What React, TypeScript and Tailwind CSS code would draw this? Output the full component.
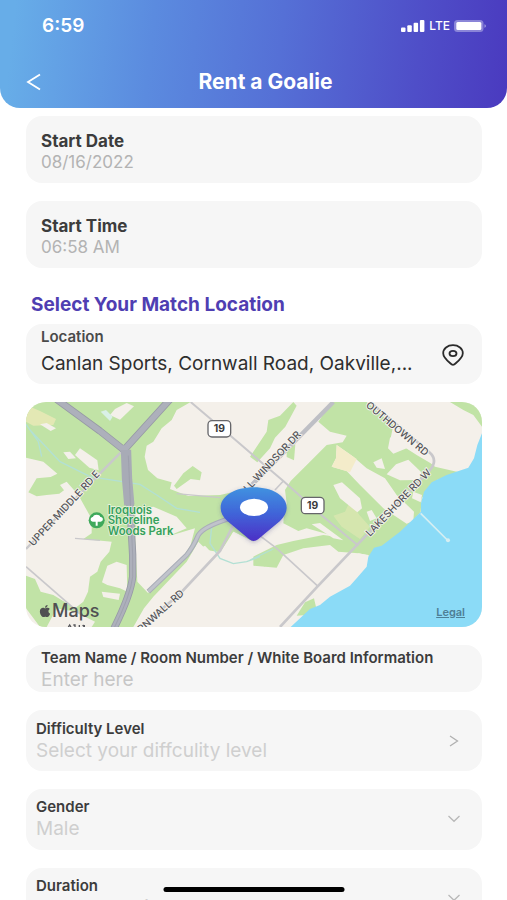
import React from "react";
import { FaApple } from "react-icons/fa";

interface CardProps {
  className?: string;
  children: React.ReactNode;
}

const Card: React.FC<CardProps> = ({ className = "", children }) => (
  <div className={`bg-[#f6f6f6] rounded-2xl ${className}`}>{children}</div>
);

interface TextFieldProps {
  id: string;
  label: string;
  value: string;
}

// Start date / start time
const TextField: React.FC<TextFieldProps> = ({ id, label, value }) => (
  <Card className="flex flex-col px-[15px] pt-[15px] pb-[9px]">
    <label htmlFor={id} className="text-[17px] leading-5 font-bold text-[#3c3c3c]">
      {label}
    </label>
    <input
      id={id}
      type="text"
      defaultValue={value}
      className="w-full h-[23px] bg-transparent text-[17px] text-[#b3b3b3] outline-none"
    />
  </Card>
);

interface SelectFieldProps {
  id: string;
  label: string;
  options: string[];
}

const SelectField: React.FC<SelectFieldProps> = ({ id, label, options }) => (
  <Card className="flex items-center pl-2.5 pr-[21px] pt-2 pb-[9px]">
    <div className="flex-1 flex flex-col">
      <label htmlFor={id} className="text-[15px] leading-5 font-semibold text-[#3c3c3c]">
        {label}
      </label>
      <select
        id={id}
        className="appearance-none w-full h-6 leading-6 bg-transparent text-[19px] text-[#cfcfcf] outline-none"
      >
        {options.map((option) => (
          <option key={option}>{option}</option>
        ))}
      </select>
    </div>
    <svg viewBox="0 0 14 8" className="w-3.5 h-2 shrink-0" fill="none" stroke="#b8b8b8" strokeWidth="1.3">
      <path d="M1.5 1 7 6.3 12.5 1" />
    </svg>
  </Card>
);

const StatusBar = () => (
  <div className="flex items-center justify-between pl-[42px] pr-[21px] text-white">
    <span className="text-[19px] leading-6 font-semibold">6:59</span>
    <div className="flex items-center gap-1">
      <svg viewBox="0 0 24 12" className="w-6 h-3" fill="white">
        <rect x="0" y="7.5" width="4.5" height="4.5" rx="1" />
        <rect x="6.3" y="5.3" width="4.5" height="6.7" rx="1" />
        <rect x="12.6" y="2.8" width="4.5" height="9.2" rx="1" />
        <rect x="18.9" y="0" width="4.5" height="12" rx="1" />
      </svg>
      <span className="text-[12px] leading-4 font-medium">LTE</span>
      <svg viewBox="0 0 32 12" className="w-8 h-3">
        <rect x="0" y="0" width="29.5" height="12" rx="3.5" fill="white" fillOpacity="0.35" />
        <rect x="2.3" y="2" width="25" height="8" rx="1.5" fill="white" />
        <path d="M30.5 4.2c1.8.6 1.8 3 0 3.6z" fill="white" fillOpacity="0.5" />
      </svg>
    </div>
  </div>
);

interface RoadLabelProps {
  x: number;
  y: number;
  angle: number;
  name: string;
}

const RoadLabel: React.FC<RoadLabelProps> = ({ x, y, angle, name }) => (
  <text
    x={x}
    y={y}
    transform={`rotate(${angle} ${x} ${y})`}
    fontSize="30"
    fontWeight="500"
    fill="#55555a"
    stroke="#f7f5f0"
    strokeWidth="5"
    paintOrder="stroke"
  >
    {name}
  </text>
);

const RouteShield: React.FC<{ x: number; y: number }> = ({ x, y }) => (
  <g>
    <rect x={x} y={y} width="68" height="49" rx="12" fill="white" stroke="#66666a" strokeWidth="4" />
    <text x={x + 34} y={y + 35} textAnchor="middle" fontSize="31" fontWeight="700" fill="#3a3a3c">
      19
    </text>
  </g>
);

const MapArt = () => (
  <svg viewBox="18 21 1368 675" preserveAspectRatio="xMidYMid slice" className="block w-full h-full">
    <defs>
      <linearGradient id="pin" x1="0" y1="0" x2="0" y2="1">
        <stop offset="0" stopColor="#3f92e0" />
        <stop offset="0.5" stopColor="#4163d8" />
        <stop offset="1" stopColor="#4c2fc6" />
      </linearGradient>
      <filter id="pinShadow" x="-20%" y="-20%" width="140%" height="140%">
        <feDropShadow dx="0" dy="4" stdDeviation="7" floodColor="#4a4a8a" floodOpacity="0.35" />
      </filter>
    </defs>
    <rect x="18" y="21" width="1368" height="675" fill="#f4f0ea" />

    {/* Parks */}
    <g fill="#c1e3a6">
      <path d="M18 21H512L470 45 455 75 425 100 400 140 380 152 374 185 384 225 412 250 455 262 450 282 505 303 600 300 690 280 700 440 640 410 625 440 600 472 560 465 535 440 500 500 400 605 372 640 340 696H60L18 640Z" />
      <path d="M820 21 830 32 796 95 765 128 750 160 712 202 690 185 740 110 745 75 780 62Z" />
      <path d="M800 165 826 148 822 196 800 186Z" />
      <path d="M935 21H1040L1120 90 1112 130 1190 180 1232 205 1245 215 1330 235 1250 255 1205 310 1202 350 1160 400 1050 482 1015 475 955 470 930 450 850 460 790 480 770 518 700 512 690 490 770 450 820 438 910 420 950 425 860 400 835 408 790 385 792 350 800 325 795 285 812 258 870 200 920 150 968 142 980 122 930 110 895 80Z" />
      <path d="M830 662 855 622 882 610 888 636 860 660Z" />
      <path d="M1290 21H1386V95L1360 60 1330 45Z" />
      <path d="M490 235 518 213 545 232 540 256 512 252 470 282 462 272Z" />
      <path d="M715 500 740 490 735 515Z" />
    </g>
    <g fill="#e3e8b4">
      <path d="M18 30 60 48 108 72 100 90 40 92 18 80Z" />
      <path d="M940 362 975 350 990 318 1018 360 1050 395 1020 432 965 395Z" fillOpacity="0.6" />
    </g>

    {/* Open land */}
    <g fill="#f4f0ea">
      <path d="M18 188 70 200 112 236 92 246 50 250 25 292 50 304 80 300 118 296 132 286 120 270 140 260 175 300 215 372 215 415 190 432 275 440 268 470 242 500 232 530 210 545 204 590 190 620 165 640 100 600 62 590 45 552 18 542Z" />
      <path d="M165 180 180 160 232 196 236 226 208 218Z" />
      <path d="M60 88 80 84 108 100 92 108Z" />
      <path d="M270 60 285 42 320 24 342 34 300 74Z" />
      <path d="M130 172 150 170 168 190 145 192Z" />
      <path d="M345 425 350 395 440 425 525 400 512 450 480 500 384 594 352 560Z" />
      <path d="M345 345 400 335 470 365 500 400 440 425 350 398Z" />
      <path d="M262 512 290 500 320 510 322 590 300 580 262 570 246 562Z" />
      <path d="M245 590 300 596 296 615 250 606Z" />
      <path d="M110 640 165 650 225 680 215 696H80Z" />
      <path d="M535 462 555 452 572 470 556 486Z" />
      <path d="M640 410 700 440V696H345L480 600 600 474Z" />
      <path d="M940 270 966 262 1020 310 1026 340 1012 352 985 330 960 310Z" />
      <path d="M1100 238 1128 208 1165 194 1204 232 1198 255 1140 256Z" />
      <path d="M1060 202 1085 190 1095 222 1070 218Z" />
      <path d="M1110 128 1132 118 1240 190 1218 192 1160 160 1120 176 1104 160Z" />
      <path d="M1040 350 1055 345 1070 370 1050 378Z" />
      <path d="M875 388 900 384 970 436 940 430Z" />
      <path d="M1180 290 1206 300 1202 322 1176 310Z" />
    </g>
    <path d="M950 150 1000 185 1040 220 1095 250 1130 300 1182 350 1180 378 1160 386 1090 340 1020 270 980 228 935 215 948 190Z" fill="#f4f0ea" />
    <path d="M950 150 1010 192 990 232 935 215 948 190Z" fill="#f4ecca" />
    <path d="M1014 500 1015 475 1045 480 1040 510 990 570 900 635 884 618Z" fill="#f4f0ea" />

    {/* Lake and streams */}
    <path d="M1386 115 1372 150 1362 190 1345 218 1280 240 1235 262 1212 290 1203 325 1203 350 1140 410 1085 452 1062 458 1045 485 1040 515 1010 550 990 572 930 605 900 630 870 642 812 696H1386Z" fill="#8bdbf7" />
    <path d="M1202 355 1282 435" stroke="#d6eef2" strokeWidth="5" fill="none" />
    <circle cx="1284" cy="436" r="6" fill="#d6eef2" />
    <g fill="none" stroke="#b2e0d4" strokeWidth="4">
      <path d="M18 88 55 140 65 185M30 105 120 200 210 245 360 268 410 300 470 340 540 352" />
      <path d="M575 395 570 445 600 490 640 506 680 500 720 485M690 495 760 462" />
    </g>
    <path d="M242 50 258 45 278 65 270 78Z" fill="#d9f0e6" />

    {/* Minor roads */}
    <g fill="none" stroke="#c9c8cb" strokeWidth="5">
      <path d="M512 21 650 138 722 200 790 258 910 365 1015 452" strokeWidth="6" />
      <path d="M18 515 190 665" />
      <path d="M18 462 240 235 305 170" strokeWidth="7" />
      <path d="M470 296 600 308" strokeWidth="4" />
      <path d="M165 430 240 436" strokeWidth="4" />
      <path d="M690 400 770 460 895 575" />
      <path d="M765 285 790 258" />
      <path d="M350 706 480 596 600 468 640 390 710 300" strokeWidth="8" />
      <path d="M940 21 690 275" strokeWidth="13" stroke="#bebfc5" />
      <path d="M780 696 890 577 1015 446 1230 225Q1255 195 1228 172L1050 21" strokeWidth="8" />
    </g>

    {/* Highways */}
    <g fill="none" strokeLinejoin="round">
      <path d="M385 590 500 480Q520 455 535 420 550 395 630 370" stroke="#a9adb8" strokeWidth="15" />
      <path d="M385 590 500 480Q520 455 535 420 550 395 630 370" stroke="#c0c3cb" strokeWidth="9" />
      <path d="M110 13 240 108 312 165 450 13M316 150 320 240 330 330 338 480V545Q332 600 282 700" stroke="#979aa5" strokeWidth="22" />
      <path d="M110 13 240 108 312 165 450 13M316 150 320 240 330 330 338 480V545Q332 600 282 700" stroke="#adb0bb" strokeWidth="17" />
      <path d="M318 165 321 250 328 330" stroke="#a8abb6" strokeWidth="31" />
      <path d="M325 182 338 480V545Q332 600 282 700" stroke="#999ca8" strokeWidth="2" />
    </g>

    <RoadLabel x={40} y={455} angle={-47} name="UPPER MIDDLE RD E" />
    <RoadLabel x={364} y={714} angle={-42} name="RNWALL RD" />
    <RoadLabel x={684} y={292} angle={-47} name="LL WINDSOR DR" />
    <RoadLabel x={1036} y={34} angle={40} name="OUTHDOWN RD" />
    <RoadLabel x={1050} y={426} angle={-46} name="LAKESHORE RD W" />
    <path d="M145 696 149 690 153 696M160 690H165V696M178 690V696M188 690 193 696V690" stroke="#55555a" strokeWidth="4" fill="none" />
    <RouteShield x={564} y={77} />
    <RouteShield x={844} y={307} />

    {/* Park marker */}
    <circle cx="230" cy="376" r="24" fill="#3fa95b" />
    <path d="M227 392V380H218C208 378 212 365 219 366 220 357 240 357 241 366 250 365 252 378 242 380H233V392Z" fill="white" />
    <g fontSize="34" fontWeight="600" fill="#36a05c" stroke="#eef5e4" strokeWidth="4" paintOrder="stroke">
      <text x="263" y="357">Iroquois</text>
      <text x="263" y="388">Shoreline</text>
      <text x="263" y="419">Woods Park</text>
    </g>

    {/* Match location pin */}
    <path
      d="M701 438C691 438 684 430 677 424L622 378C608 365 602 352 602 338 602 303 646 277 701 277 757 277 800 303 800 338 800 352 793 365 780 378L725 424C718 430 711 438 701 438Z"
      fill="url(#pin)"
      filter="url(#pinShadow)"
    />
    <ellipse cx="702" cy="337" rx="42" ry="26" fill="white" />
  </svg>
);

export default function App() {
  return (
    <div className="relative h-screen flex flex-col overflow-hidden bg-white font-['Inter','Liberation_Sans',sans-serif]">
      {/* Header */}
      <header className="shrink-0 rounded-b-[20px] bg-linear-[96deg,#67ade8_3%,#5b8bdf_30%,#5570d6_55%,#4f4ec8_82%,#4a3abf] pt-3.5 pb-3">
        <StatusBar />
        <div className="grid grid-cols-[60px_1fr_36px] items-center pt-[30px]">
          <button aria-label="Back" className="pl-[26px] text-white">
            <svg viewBox="0 0 16 18" className="w-4 h-[18px]" fill="none" stroke="currentColor" strokeWidth="1.8">
              <path d="M14 1.5 2 9l12 7.5" />
            </svg>
          </button>
          <h1 className="text-center text-[21px] leading-7 font-bold text-white">Rent a Goalie</h1>
        </div>
      </header>

      {/* Form */}
      <main className="flex-1 min-h-0 overflow-y-auto [scrollbar-width:none] pl-[26px] pr-[25px] pt-2 pb-10 flex flex-col gap-[18px] *:shrink-0">
        <TextField id="start-date" label="Start Date" value="08/16/2022" />
        <TextField id="start-time" label="Start Time" value="06:58 AM" />

        <section className="flex flex-col">
          <h2 className="pl-[5px] pt-[7px] pb-[7px] text-[19px] leading-6 font-bold text-[#4f3eb2]">
            Select Your Match Location
          </h2>
          <Card className="flex items-center pl-[15px] pr-[18px] pt-[3px] pb-[5px]">
            <div className="flex-1 flex flex-col">
              <label htmlFor="location" className="text-[15px] leading-5 font-semibold text-[#4a4a4a]">
                Location
              </label>
              <input
                id="location"
                type="text"
                defaultValue="Canlan Sports, Cornwall Road, Oakville,..."
                className="w-full h-8 bg-transparent text-[19px] text-[#2e2e2e] outline-none"
              />
            </div>
            <button aria-label="Pick on map" className="pt-1">
              <svg viewBox="0 0 22 22" className="w-[22px] h-[22px]" fill="none" stroke="#2b2b2b" strokeWidth="1.8">
                <path d="M11 20.8C10 20.8 9.2 20.2 8 19 4.5 16 1.2 13 1.2 9.2 1.2 4.5 5.5 1.2 11 1.2S20.8 4.5 20.8 9.2C20.8 13 17.5 16 14 19 12.8 20.2 12 20.8 11 20.8Z" />
                <ellipse cx="11" cy="9.5" rx="3.5" ry="2.7" />
              </svg>
            </button>
          </Card>
        </section>

        {/* Map */}
        <div className="relative h-[225px] rounded-[20px] overflow-hidden">
          <MapArt />
          <div className="absolute left-3 bottom-1.5 flex items-center text-[#505052]">
            <FaApple className="w-3.5 h-3.5" />
            <span className="text-[18px] leading-5 font-medium">Maps</span>
          </div>
          <a href="#legal" className="absolute right-[17px] bottom-[7px] text-[11px] leading-4 font-semibold text-[#4e7f96] underline">
            Legal
          </a>
        </div>

        <Card className="flex flex-col px-[15px] pt-[3px]">
          <label htmlFor="team" className="text-[15px] leading-5 font-semibold text-[#3c3c3c]">
            Team Name / Room Number / White Board Information
          </label>
          <input
            id="team"
            type="text"
            placeholder="Enter here"
            className="w-full h-6 bg-transparent text-[19px] placeholder:text-[#c6c6c6] outline-none"
          />
        </Card>

        <button className="flex items-center bg-[#f6f6f6] rounded-2xl pl-2.5 pr-[23px] pt-[9px] pb-2 text-left">
          <span className="flex-1 flex flex-col">
            <span className="text-[15px] leading-5 font-semibold text-[#3c3c3c]">Difficulty Level</span>
            <span className="text-[19px] leading-6 text-[#cfcfcf]">Select your diffculity level</span>
          </span>
          <svg viewBox="0 0 10 12" className="w-2.5 h-3" fill="none" stroke="#b0b0b0" strokeWidth="1.3">
            <path d="M1 1 8.5 6 1 11" />
          </svg>
        </button>

        <SelectField id="gender" label="Gender" options={["Male", "Female"]} />
        <SelectField id="duration" label="Duration" options={["Select duration", "60 Minutes", "90 Minutes"]} />
      </main>

      {/* Home indicator */}
      <div className="absolute bottom-2 left-1/2 -translate-x-1/2 w-[181px] h-[5px] rounded-full bg-black" />
    </div>
  );
}
